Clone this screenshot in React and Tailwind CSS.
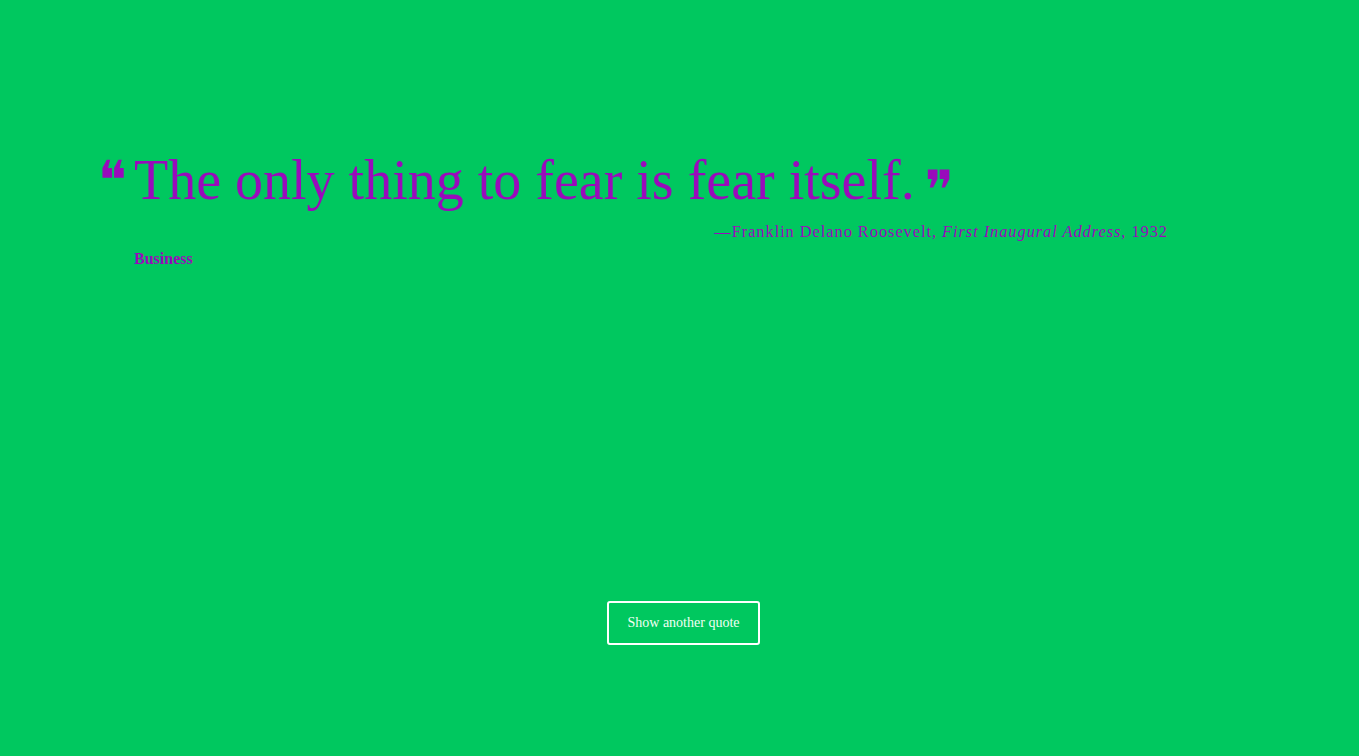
import React from 'react';

const quote = {
  text: 'The only thing to fear is fear itself.',
  author: 'Franklin Delano Roosevelt',
  source: 'First Inaugural Address',
  year: '1932',
  tag: 'Business',
};

const App = () => {
  return (
    <div className="min-h-screen w-full bg-[#00c85f] text-[#990bbb] font-['Liberation_Serif',serif] flex flex-col">
      {/* Quote */}
      <div className="pt-[152px] pl-[98px] pr-[191px]">
        <blockquote className="flex items-start h-[56px]">
          <span className="w-[36px] shrink-0 mt-[2px] font-['DejaVu_Sans',sans-serif] text-[54px] leading-none">&#10077;</span>
          <p className="text-[56px] leading-none whitespace-nowrap">{quote.text}</p>
          <span className="ml-[10px] mt-[12px] font-['DejaVu_Sans',sans-serif] text-[54px] leading-none">&#10078;</span>
        </blockquote>
        <p className="mt-[12px] text-right text-[16.5px] tracking-[0.9px]">
          &mdash;{quote.author}, <em>{quote.source}</em>, {quote.year}
        </p>
        <p className="mt-[2px] pl-[36px] text-[16px] font-bold">{quote.tag}</p>
      </div>

      {/* Action */}
      <div className="mt-[330px] flex justify-center pl-2">
        <button className="w-[153px] h-[44px] border-2 border-white rounded-[3px] text-[14px] text-[#f2fff4]">
          Show another quote
        </button>
      </div>
    </div>
  );
};

export default App;
